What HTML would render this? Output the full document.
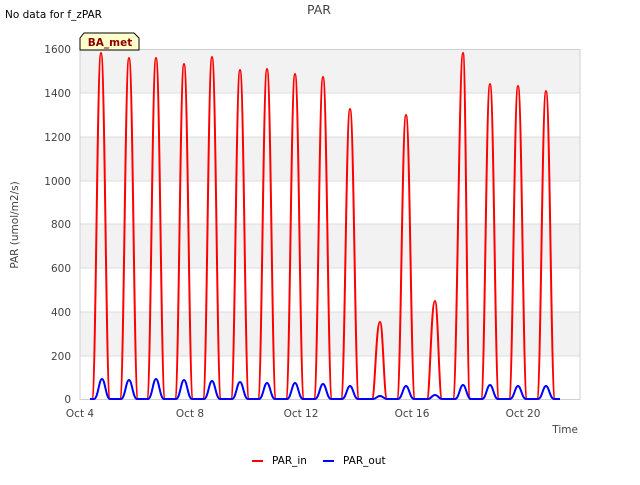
<!DOCTYPE html>
<html><head><meta charset="utf-8"><style>
html,body{margin:0;padding:0;background:#fff;}
svg text{font-family:"DejaVu Sans","Liberation Sans",sans-serif;}
</style></head><body>
<svg width="640" height="480" viewBox="0 0 640 480" xmlns="http://www.w3.org/2000/svg">
<rect x="0" y="0" width="640" height="480" fill="#fff"/>
<rect x="80" y="49" width="500" height="44" fill="#f2f2f2"/>
<rect x="80" y="137" width="500" height="44" fill="#f2f2f2"/>
<rect x="80" y="224" width="500" height="44" fill="#f2f2f2"/>
<rect x="80" y="312" width="500" height="44" fill="#f2f2f2"/>
<g stroke="#dcdcdc" stroke-width="1">
<line x1="80" y1="93" x2="580" y2="93"/>
<line x1="80" y1="137" x2="580" y2="137"/>
<line x1="80" y1="181" x2="580" y2="181"/>
<line x1="80" y1="224" x2="580" y2="224"/>
<line x1="80" y1="268" x2="580" y2="268"/>
<line x1="80" y1="312" x2="580" y2="312"/>
<line x1="80" y1="356" x2="580" y2="356"/>
</g>
<rect x="80" y="49.5" width="500" height="350" fill="none" stroke="#d0d0d0"/>
<g font-size="10.5" fill="#444" text-anchor="end">
<text x="71" y="53">1600</text><text x="71" y="97">1400</text><text x="71" y="141">1200</text>
<text x="71" y="185">1000</text><text x="71" y="228">800</text><text x="71" y="272">600</text>
<text x="71" y="316">400</text><text x="71" y="360">200</text><text x="71" y="403">0</text>
</g>
<g font-size="10.5" fill="#444" text-anchor="middle">
<text x="80" y="417">Oct 4</text><text x="190" y="417">Oct 8</text><text x="301" y="417">Oct 12</text>
<text x="412" y="417">Oct 16</text><text x="523" y="417">Oct 20</text>
</g>
<text x="578" y="433" font-size="10.5" fill="#444" text-anchor="end">Time</text>
<text x="319" y="14" font-size="12.5" fill="#444" text-anchor="middle">PAR</text>
<text x="5" y="18" font-size="10.5" fill="#000">No data for f_zPAR</text>
<text x="18" y="225" font-size="10.5" fill="#444" text-anchor="middle" transform="rotate(-90 18 225)">PAR (umol/m2/s)</text>
<path d="M84,33 L134,33 L139,38 L139,50 L80,50 L80,38 L84,33 Z" fill="#ffffcc" stroke="#000" stroke-width="1"/>
<text x="110" y="46" font-size="10.5" font-weight="bold" fill="#8b0000" text-anchor="middle">BA_met</text>
<path fill="none" stroke="#ff0000" stroke-width="2" d="M90,399
L92,399 C96,399 97,53 101,53 C105,53 106,399 110,399
L120,399 C124,399 125,58 129,58 C133,58 134,399 138,399
L147,399 C151,399 152,58 156,58 C160,58 161,399 165,399
L175,399 C179,399 180,64 184,64 C188,64 189,399 193,399
L203,399 C207,399 208,57 212,57 C216,57 217,399 221,399
L231,399 C235,399 236,70 240,70 C244,70 245,399 249,399
L258,399 C262,399 263,69 267,69 C271,69 272,399 276,399
L286,399 C290,399 291,74 295,74 C299,74 300,399 304,399
L314,399 C318,399 319,77 323,77 C327,77 328,399 332,399
L341,399 C345,399 346,109 350,109 C354,109 355,399 359,399
L372,399 C375,399 376,322 380,322 C383,322 384,399 387,399
L397,399 C401,399 402,115 406,115 C410,115 411,399 415,399
L427,399 C430,399 431,301 435,301 C438,301 439,399 442,399
L453,399 C457,399 459,53 463,53 C466,53 467,399 470,399
L481,399 C485,399 486,84 490,84 C494,84 495,399 499,399
L509,399 C513,399 514,86 518,86 C522,86 523,399 527,399
L537,399 C541,399 542,91 546,91 C550,91 551,399 555,399 L560,399"/>
<path fill="none" stroke="#0000ff" stroke-width="2" d="M90,399
L94,399 C98,399 99,379 102,379 C105,379 106,399 110,399
L121,399 C125,399 126,380 129,380 C132,380 133,399 137,399
L148,399 C152,399 153,379 156,379 C159,379 160,399 164,399
L176,399 C180,399 181,380 184,380 C187,380 188,399 192,399
L204,399 C208,399 209,381 212,381 C215,381 216,399 220,399
L232,399 C236,399 237,382 240,382 C243,382 244,399 248,399
L259,399 C263,399 264,383 267,383 C270,383 271,399 275,399
L287,399 C291,399 292,383 295,383 C298,383 299,399 303,399
L315,399 C319,399 320,384 323,384 C326,384 327,399 331,399
L342,399 C346,399 347,386 350,386 C353,386 354,399 358,399
L373,399 C376,399 377,396 380,396 C383,396 384,399 387,399
L398,399 C402,399 403,386 406,386 C409,386 410,399 414,399
L428,399 C431,399 432,395 435,395 C438,395 439,399 442,399
L455,399 C459,399 460,385 463,385 C466,385 467,399 471,399
L482,399 C486,399 487,385 490,385 C493,385 494,399 498,399
L510,399 C514,399 515,386 518,386 C521,386 522,399 526,399
L538,399 C542,399 543,386 546,386 C549,386 550,399 554,399 L560,399"/>
<line x1="252" y1="461" x2="263" y2="461" stroke="#ff0000" stroke-width="2"/>
<text x="272" y="464" font-size="10.5" fill="#000">PAR_in</text>
<line x1="323" y1="461" x2="334" y2="461" stroke="#0000ff" stroke-width="2"/>
<text x="343" y="464" font-size="10.5" fill="#000">PAR_out</text>
</svg>
</body></html>
